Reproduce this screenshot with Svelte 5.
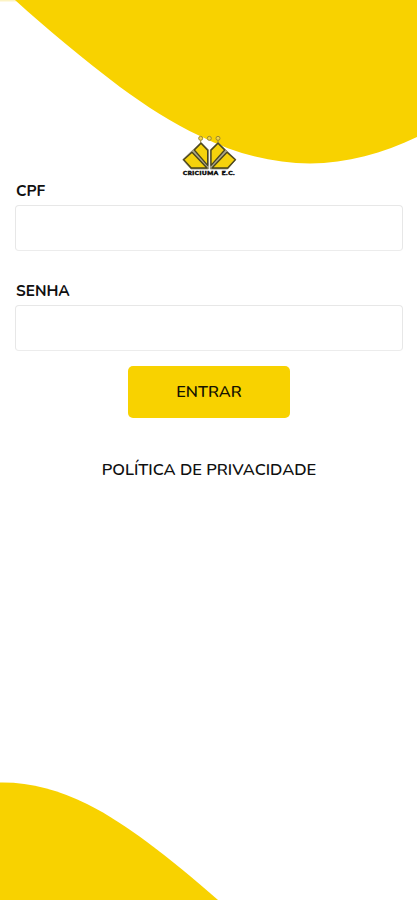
<script lang="ts">
  let cpf = $state("");
  let senha = $state("");

  function entrar(event: SubmitEvent) {
    event.preventDefault();
  }
</script>

<main class="page">
  <svg class="waves" viewBox="0 0 417 900" aria-hidden="true">
    <path class="edge" d="M0 0H17V1.5H0Z" />
    <path
      d="M15 0C46 28 83 59 120 87C146 106 172 123 200 136C236 154 273 163.5 310 163.5C347 163.5 383 153 417 137V0Z"
    />
    <path
      d="M0 782.5C30 782 59 790 87 804C109 815 128 828 147 842C171 860 193 878 218 900H0Z"
    />
  </svg>

  <form class="login" onsubmit={entrar}>
    <svg class="logo" viewBox="0 0 210 162" role="img" aria-label="Criciúma E.C.">
      <g class="stars">
        <circle cx="80" cy="31" r="6" />
        <circle cx="106" cy="31" r="6" />
        <circle cx="132" cy="31" r="6" />
        <path d="M80 37V46M132 37V46" />
      </g>
      <path class="base" d="M81 43L103 65V123H51L26 95Z" />
      <path class="base" d="M132 43L186 95L161 123H109V65Z" />
      <g class="shield">
        <path d="M81 46L101 67V112L61 66Z" />
        <path d="M54 73L99 120H52L29 95Z" />
        <path d="M132 46L152 66L111 112V67Z" />
        <path d="M159 73L184 95L161 120H114Z" />
      </g>
      <text x="27" y="141" textLength="107" lengthAdjust="spacingAndGlyphs">CRICIUMA</text>
      <text x="143" y="141" textLength="41" lengthAdjust="spacingAndGlyphs">E.C.</text>
    </svg>

    <label for="cpf">CPF</label>
    <input id="cpf" type="text" bind:value={cpf} />

    <label class="second" for="senha">SENHA</label>
    <input id="senha" type="password" bind:value={senha} />

    <button type="submit">ENTRAR</button>
    <a href="#politica">POLÍTICA DE PRIVACIDADE</a>
  </form>
</main>

<style>
  :global(body) {
    background: #fff;
  }

  .page {
    position: relative;
    height: 900px;
    overflow: hidden;
    font-family: Nunito, Lato, sans-serif;
    color: #101010;
  }

  .waves {
    position: absolute;
    top: 0;
    left: 0;
    width: 100%;
    height: 100%;
    fill: #f8d200;

    .edge {
      fill: #fcf3c4;
    }
  }

  .login {
    position: relative;
    display: flex;
    flex-direction: column;
    padding: 128px 14px 0 15px;
  }

  .logo {
    width: 70px;
    height: 54px;
    align-self: center;

    .stars {
      fill: #f3d54c;
      stroke: #9b8730;
      stroke-width: 3;
    }

    .base {
      fill: #aaa58a;
      stroke: #77735f;
      stroke-width: 2;
    }

    .shield {
      fill: #f5d20c;
      stroke: #4a451d;
      stroke-width: 4;
      stroke-linejoin: round;
    }

    text {
      font: 900 16px Lato, sans-serif;
      letter-spacing: 1.5px;
      fill: #111;
      stroke: #111;
      stroke-width: 1.5;
    }
  }

  label {
    height: 23px;
    padding-left: 1px;
    font-size: 15.4px;
    font-weight: 700;
    line-height: 18px;

    &.second {
      margin-top: 31px;
    }
  }

  input {
    box-sizing: border-box;
    width: 100%;
    height: 46px;
    padding: 0 12px;
    border: 1px solid #e7e7e7;
    border-bottom-color: #ececec;
    border-radius: 4px;
    outline: none;
    background: #fff;
    font: inherit;
  }

  button {
    width: 162px;
    height: 52px;
    margin-top: 15px;
    padding: 0;
    align-self: center;
    border: 0;
    border-radius: 5px;
    background: #f8d200;
    font: 600 16.3px Nunito, Lato, sans-serif;
    color: #151300;
  }

  a {
    margin-top: 42px;
    align-self: center;
    font-size: 16.4px;
    font-weight: 600;
    line-height: 20px;
    color: inherit;
    text-decoration: none;
  }
</style>
